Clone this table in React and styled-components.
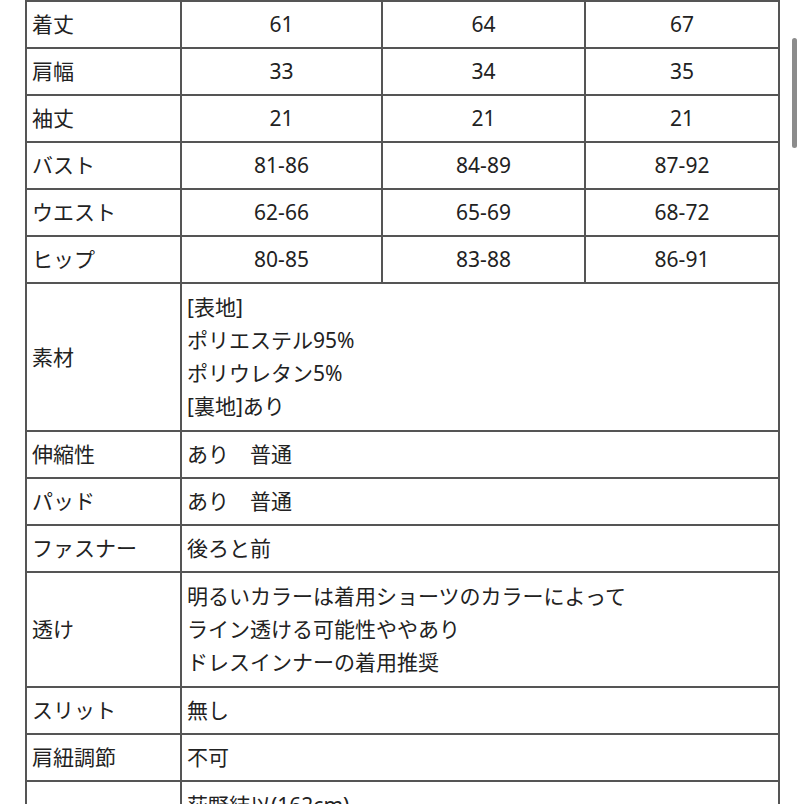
import React from 'react'
import styled, { createGlobalStyle } from 'styled-components'

const GlobalStyle = createGlobalStyle`
  html, body {
    margin: 0;
    padding: 0;
    background: #fff;
    overflow: hidden;
    height: 804px;
  }
`

const Page = styled.div`
  position: relative;
  width: 804px;
  height: 804px;
  overflow: hidden;
  background: #fff;
  font-family: 'Noto Sans', 'Noto Sans CJK JP', sans-serif;
  color: #222;
`

const SpecTable = styled.table`
  margin-left: 25px;
  width: 753px;
  border-collapse: collapse;
  table-layout: fixed;
  font-size: 21px;
  line-height: 33px;
`

const Column = styled.col`
  width: ${({ w }) => w}px;
`

const Cell = styled.td`
  border: 2px solid #555;
  padding: ${({ tall }) => (tall ? '7px 5px' : '6px 5px')};
  vertical-align: middle;
  text-align: ${({ center }) => (center ? 'center' : 'left')};
  white-space: nowrap;
`

const Line = styled.div``

const ScrollThumb = styled.div`
  position: absolute;
  top: 38px;
  left: 792px;
  width: 5px;
  height: 110px;
  border-radius: 3px;
  background: #8c8c8c;
`

const sizes = [
  ['着丈', '61', '64', '67'],
  ['肩幅', '33', '34', '35'],
  ['袖丈', '21', '21', '21'],
  ['バスト', '81-86', '84-89', '87-92'],
  ['ウエスト', '62-66', '65-69', '68-72'],
  ['ヒップ', '80-85', '83-88', '86-91'],
]

const details = [
  ['素材', ['[表地]', 'ポリエステル95%', 'ポリウレタン5%', '[裏地]あり']],
  ['伸縮性', ['あり　普通']],
  ['パッド', ['あり　普通']],
  ['ファスナー', ['後ろと前']],
  ['透け', ['明るいカラーは着用ショーツのカラーによって', 'ライン透ける可能性ややあり', 'ドレスインナーの着用推奨']],
  ['スリット', ['無し']],
  ['肩紐調節', ['不可']],
  ['', ['荻野結以(162cm)', 'Mサイズ着用']],
]

export default function App() {
  return (
    <Page>
      <GlobalStyle />
      <SpecTable>
        <colgroup>
          <Column w={155} />
          <Column w={201} />
          <Column w={203} />
          <Column w={194} />
        </colgroup>
        <tbody>
          {sizes.map(([label, ...vals]) => (
            <tr key={label}>
              <Cell>{label}</Cell>
              {vals.map((v, i) => (
                <Cell key={i} center>{v}</Cell>
              ))}
            </tr>
          ))}
          {details.map(([label, lines], idx) => (
            <tr key={idx}>
              <Cell tall={lines.length > 1}>{label}</Cell>
              <Cell tall={lines.length > 1} colSpan={3}>
                {lines.map((l, i) => (
                  <Line key={i}>{l}</Line>
                ))}
              </Cell>
            </tr>
          ))}
        </tbody>
      </SpecTable>
      <ScrollThumb />
    </Page>
  )
}
